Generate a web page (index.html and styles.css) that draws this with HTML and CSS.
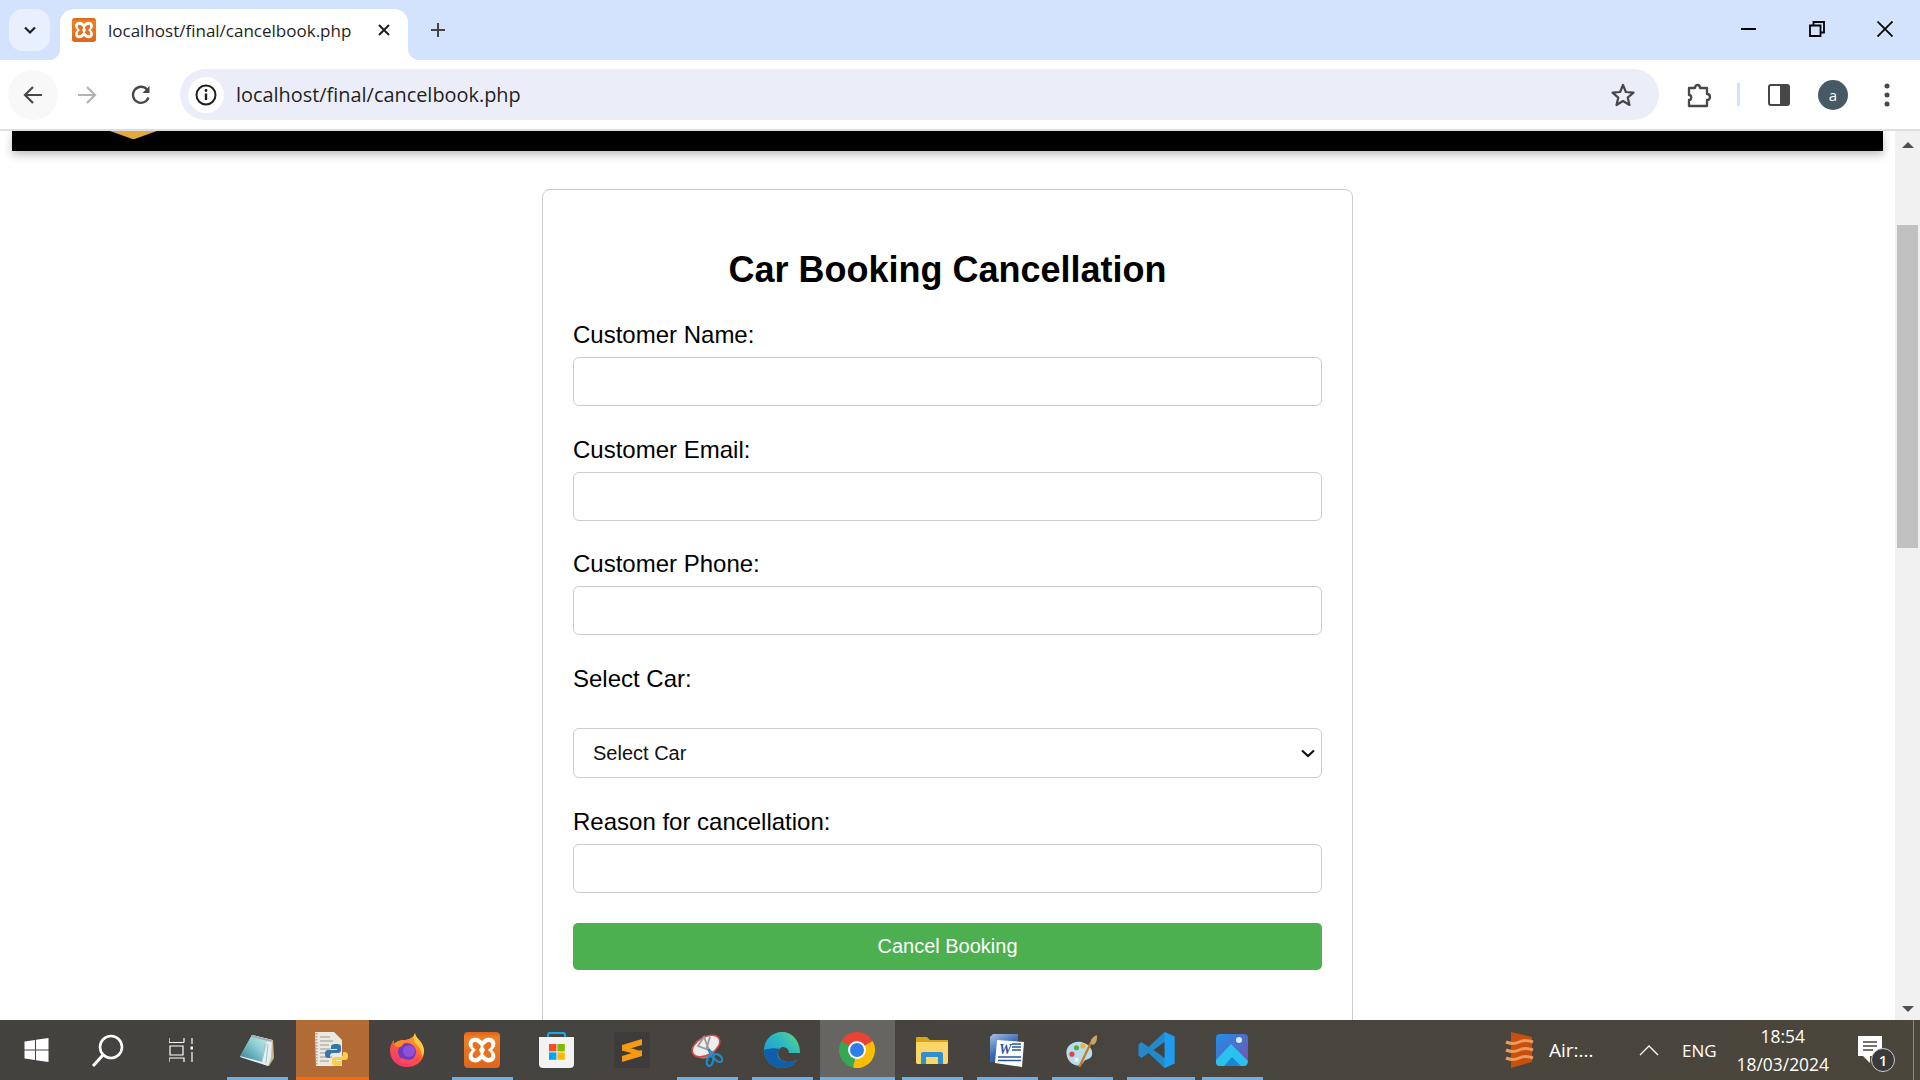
FILE: index.html
```html
<!DOCTYPE html>
<html lang="en">
<head>
    <meta charset="UTF-8">
    <meta name="viewport" content="width=device-width, initial-scale=1.0">
    <title>localhost/final/cancelbook.php</title>
    <link rel="stylesheet" href="styles.css">
</head>
<body>

    <svg class="defs" width="0" height="0">
        <defs>
            <linearGradient id="xamppBg" x1="0" y1="0" x2="0" y2="1"><stop offset="0" stop-color="#d9651c"/><stop offset="0.15" stop-color="#f07f22"/><stop offset="1" stop-color="#e0651a"/></linearGradient>
            <linearGradient id="photosBg" x1="0" y1="0" x2="1" y2="1"><stop offset="0" stop-color="#1e90e8"/><stop offset="1" stop-color="#7a4fb0"/></linearGradient>
            <linearGradient id="padBg" x1="0" y1="1" x2="1" y2="0"><stop offset="0" stop-color="#2d7f93"/><stop offset="0.6" stop-color="#8fcfd6"/><stop offset="1" stop-color="#d4ecec"/></linearGradient>
            <linearGradient id="foxBg" x1="0.8" y1="0" x2="0.2" y2="1"><stop offset="0" stop-color="#ffb52e"/><stop offset="0.5" stop-color="#ff5b3a"/><stop offset="1" stop-color="#f5307a"/></linearGradient>
            <linearGradient id="edgeTop" x1="0" y1="1" x2="1" y2="0"><stop offset="0" stop-color="#1a8fd8"/><stop offset="0.6" stop-color="#2bb8c4"/><stop offset="1" stop-color="#66d975"/></linearGradient>
            <linearGradient id="wordBack" x1="0" y1="0" x2="0.6" y2="1"><stop offset="0" stop-color="#a9c1e6"/><stop offset="0.6" stop-color="#3a69b3"/><stop offset="1" stop-color="#2a559c"/></linearGradient>
        </defs>
        <symbol id="xampp" viewBox="0 0 36 36">
            <rect width="36" height="36" rx="4" fill="url(#xamppBg)"/>
            <path d="M9 6c4-1 6 0 9 3 3-3 5-4 9-3 4 1 5 5 4 8-1 2-2 3-3 4 1 1 2 2 3 4 1 3 0 7-4 8-4 1-6 0-9-3-3 3-5 4-9 3-4-1-5-5-4-8 1-2 2-3 3-4-1-1-2-2-3-4-1-3 0-7 4-8z" fill="#fff"/>
            <path d="M11 10c2 0 3 1 5 3 1 1 1 2 0 3l-1 2 1 2c1 1 1 2 0 3-2 2-3 3-5 3-3 0-3-4-1-6l2-2-2-2c-2-2-2-6 1-6zM25 10c-2 0-3 1-5 3-1 1-1 2 0 3l1 2-1 2c-1 1-1 2 0 3 2 2 3 3 5 3 3 0 3-4 1-6l-2-2 2-2c2-2 2-6-1-6z" fill="#e8701e"/>
        </symbol>
    </svg>

    <header class="tabstrip">
        <button class="tab-search" aria-label="Search tabs">
            <svg width="16" height="16" viewBox="0 0 16 16"><path d="M3 5.500l5 5 5-5" fill="none" stroke="#1f1f1f" stroke-width="2.200"/></svg>
        </button>
        <div class="tab">
            <svg class="favicon" width="24" height="24"><use href="#xampp"/></svg>
            <span class="tab-title">localhost/final/cancelbook.php</span>
            <svg class="tab-close" width="14" height="14" viewBox="0 0 14 14"><path d="M2 2l10 10M12 2L2 12" stroke="#1f1f1f" stroke-width="2"/></svg>
        </div>
        <svg class="new-tab" width="18" height="18" viewBox="0 0 18 18"><path d="M9 2v14M2 9h14" stroke="#444" stroke-width="2"/></svg>
        <div class="window-controls">
            <span class="win-btn"><svg width="16" height="16" viewBox="0 0 16 16"><path d="M0 8h15" stroke="#000" stroke-width="2"/></svg></span>
            <span class="win-btn"><svg width="16" height="16" viewBox="0 0 16 16"><path d="M1 4.500h10.500v10.500H1zM4.500 4V1H15v10.500h-3" fill="none" stroke="#000" stroke-width="1.800"/></svg></span>
            <span class="win-btn"><svg width="16" height="16" viewBox="0 0 16 16"><path d="M.5.500l15 15M15.500.500l-15 15" stroke="#000" stroke-width="1.800"/></svg></span>
        </div>
    </header>

    <nav class="toolbar">
        <span class="tool-btn tool-btn-hover">
            <svg width="22" height="22" viewBox="0 0 22 22"><path d="M20 11H3M11 3l-8 8 8 8" fill="none" stroke="#474747" stroke-width="2.200"/></svg>
        </span>
        <span class="tool-btn">
            <svg width="22" height="22" viewBox="0 0 22 22"><path d="M2 11h17M11 3l8 8-8 8" fill="none" stroke="#b3b3b3" stroke-width="2.200"/></svg>
        </span>
        <span class="tool-btn">
            <svg width="22" height="22" viewBox="0 0 22 22"><path d="M18.500 13.500A8 8 0 1 1 17 5.500" fill="none" stroke="#474747" stroke-width="2.300"/><path d="M19.500 2v7h-7z" fill="#474747"/></svg>
        </span>
        <div class="omnibox">
            <span class="site-info">
                <svg width="22" height="22" viewBox="0 0 22 22"><circle cx="11" cy="11" r="9.500" fill="none" stroke="#1f1f1f" stroke-width="2"/><path d="M11 9.500v6.500" stroke="#1f1f1f" stroke-width="2.400"/><circle cx="11" cy="6.500" r="1.400" fill="#1f1f1f"/></svg>
            </span>
            <span class="url">localhost/final/cancelbook.php</span>
            <svg class="star" width="26" height="26" viewBox="0 0 26 26"><path d="M13 3l2.900 7 7.600.600-5.800 5 1.800 7.400L13 19l-6.500 4 1.800-7.400-5.800-5 7.600-.600z" fill="none" stroke="#474747" stroke-width="2.200" stroke-linejoin="round"/></svg>
        </div>
        <span class="tool-btn ext-btn">
            <svg width="26" height="26" viewBox="0 0 26 26"><path d="M3 6h6c0-4 5-4 5 0h7v6c4 0 4 6 0 6v6H3v-6c3 0 3-5 0-5z" fill="none" stroke="#474747" stroke-width="2.300" stroke-linejoin="round"/></svg>
        </span>
        <span class="divider"></span>
        <span class="tool-btn panel-btn">
            <svg width="22" height="22" viewBox="0 0 22 22"><rect x="1" y="1" width="20" height="20" rx="2" fill="none" stroke="#474747" stroke-width="2"/><path d="M12 1h7a2 2 0 0 1 2 2v16a2 2 0 0 1-2 2h-7z" fill="#474747"/></svg>
        </span>
        <span class="tool-btn"><span class="avatar">a</span></span>
        <span class="tool-btn">
            <svg width="6" height="24" viewBox="0 0 6 24"><circle cx="3" cy="3" r="2.500" fill="#474747"/><circle cx="3" cy="12" r="2.500" fill="#474747"/><circle cx="3" cy="21" r="2.500" fill="#474747"/></svg>
        </span>
    </nav>

    <div class="viewport">
        <main class="page">
            <div class="banner">
                <svg class="banner-logo" width="47" height="8" viewBox="0 0 47 8"><path d="M0 0h47L26 7.500q-2.500 1-5 0z" fill="#e2a93f"/></svg>
            </div>
            <form class="card">
                <h2>Car Booking Cancellation</h2>
                <div class="field">
                    <label>Customer Name:</label>
                    <input type="text">
                </div>
                <div class="field">
                    <label>Customer Email:</label>
                    <input type="text">
                </div>
                <div class="field">
                    <label>Customer Phone:</label>
                    <input type="text">
                </div>
                <div class="field">
                    <label class="label-select">Select Car:</label>
                    <div class="select-wrap">
                        <select><option>Select Car</option></select>
                        <svg class="select-arrow" width="14" height="9" viewBox="0 0 14 9"><path d="M1 1.500l6 5.500 6-5.500" fill="none" stroke="#111" stroke-width="2.200"/></svg>
                    </div>
                </div>
                <div class="field field-last">
                    <label>Reason for cancellation:</label>
                    <input type="text">
                </div>
                <button type="button" class="submit">Cancel Booking</button>
            </form>
        </main>
        <div class="scrollbar">
            <span class="arrow arrow-up"></span>
            <span class="thumb"></span>
            <span class="arrow arrow-down"></span>
        </div>
    </div>

    <footer class="taskbar">
        <span class="task task-start">
            <svg width="25" height="24" viewBox="0 0 24 24"><path d="M0 3.500L10.500 2v9.500H0zM11.500 1.800L24 0v11.500H11.500zM0 12.500h10.500V22L0 20.500zM11.500 12.500H24V24l-12.500-1.800z" fill="#fff"/></svg>
        </span>
        <span class="task task-search">
            <svg width="33" height="33" viewBox="0 0 33 33"><circle cx="20" cy="13" r="11" fill="none" stroke="#fff" stroke-width="2.600"/><path d="M12 21L2 32" stroke="#fff" stroke-width="3"/></svg>
        </span>
        <span class="task task-view">
            <svg width="24" height="24" viewBox="0 0 24 24" fill="none" stroke="#fff" stroke-width="1.200"><path d="M0 4.500h15M15 0v4.500M0 0v4.500M1 8h13v9H1zM0 24v-4h15v4M23 0v6M23 14v10"/><path d="M21.500 8.500h3v3h-3z" fill="#fff" stroke="none"/></svg>
        </span>

        <span class="task running">
            <svg width="34" height="32" viewBox="0 0 34 32"><path d="M12 1l21 5 1 18-5 8-6-2z" fill="#c9b98a"/><path d="M12 1l20 5-1 18-3 8L0 23z" fill="#e7eef0"/><path d="M12 1l16 4-6 23L0 22z" fill="url(#padBg)"/><path d="M12 1l20 5-.5 2L11 3z" fill="#9fb0b2"/><path d="M25 10l-3 17M28 10l-2 19" stroke="#a5c4cc"/></svg>
        </span>
        <span class="task active-file">
            <svg width="33" height="34" viewBox="0 0 33 34"><path d="M0 0h19l8 8v26H1z" fill="#ebe8e2"/><path d="M1.500 1v32" stroke="#b4a699" stroke-width="2" stroke-dasharray="1.500 1.500"/><path d="M5 5h10M5 9h13M5 13h9M5 17h11M5 21h10M5 25h12M5 29h9" stroke="#9a968f" stroke-width="1.200"/><path d="M21 12c-4 0-5 1-5 3v2h6v1h-9c-2 0-3 1-3 4s1 4 3 4h2v-2c0-2 1-3 3-3h5c2 0 3-1 3-3v-3c0-2-1-3-5-3z" fill="#3476ab"/><path d="M22 34c4 0 5-1 5-3v-2h-6v-1h9c2 0 3-1 3-4s-1-4-3-4h-2v2c0 2-1 3-3 3h-5c-2 0-3 1-3 3v3c0 2 1 3 5 3z" fill="#f8d047"/></svg>
        </span>
        <span class="task">
            <svg width="34" height="34" viewBox="0 0 34 34"><path d="M25 0c0 5 8 8 9 17 1 10-7 17-17 17S0 27 0 17c0-4 2-8 4-10 0 2 0 3 1 4 2-3 6-4 10-4 5-1 9-3 10-7z" fill="url(#foxBg)"/><path d="M25 0c0 5 8 8 9 17 0 3-1 5-2 7 0-7-4-12-7-14-1-3-2-6 0-10z" fill="#ffc93a"/><circle cx="17" cy="19" r="9" fill="#6d3cc0"/><circle cx="19" cy="18" r="6" fill="#9050d8"/><path d="M4 11c3-4 10-5 15-3-3 0-6 2-7 5-3 2-7 1-8-2z" fill="#ff8a2a"/><path d="M8 28c6 4 16 3 21-4-4 3-12 4-17 1z" fill="#ff4a5a"/></svg>
        </span>
        <span class="task running">
            <svg width="36" height="36"><use href="#xampp"/></svg>
        </span>
        <span class="task">
            <svg width="35" height="36" viewBox="0 0 35 36"><path d="M9 7V3q0-2 2-2h13q2 0 2 2v4" fill="none" stroke="#1ca7e0" stroke-width="2.200"/><path d="M0 5h35v27q0 4-4 4H4q-4 0-4-4z" fill="#f3f3f3"/><path d="M10 12h7.400v7.400H10z" fill="#f25022"/><path d="M18.400 12h7.400v7.400h-7.400z" fill="#7fba00"/><path d="M10 20.400h7.400v7.400H10z" fill="#00a4ef"/><path d="M18.400 20.400h7.400v7.400h-7.400z" fill="#ffb900"/></svg>
        </span>
        <span class="task">
            <span class="sublime">
                <svg width="20" height="23" viewBox="0 0 20 23"><path d="M20 0v6L0 12V6zM20 11v6L0 23v-6zM0 6.500l20 6v4.500L0 11.500z" fill="#f59a12"/></svg>
            </span>
        </span>
        <span class="task running">
            <svg width="33" height="33" viewBox="0 0 33 33"><ellipse cx="15" cy="14" rx="12" ry="10" transform="rotate(-30 15 14)" fill="#8f8f8f"/><ellipse cx="16" cy="12" rx="15" ry="9" transform="rotate(-30 16 12)" fill="#eee" stroke="#d8484a" stroke-width="1.600"/><path d="M14 3l5 13-11-4zM20 3l-4 13" fill="none" stroke="#9a9a9a" stroke-width="1.800"/><path d="M18 15l3 7M19 15l5 6" stroke="#1c8bc9" stroke-width="1.600"/><ellipse cx="20" cy="27" rx="3" ry="5" transform="rotate(15 20 27)" fill="none" stroke="#1c8bc9" stroke-width="2.200"/><ellipse cx="28" cy="24" rx="3" ry="5" transform="rotate(-50 28 24)" fill="none" stroke="#1c8bc9" stroke-width="2.200"/></svg>
        </span>
        <span class="task running">
            <svg width="36" height="36" viewBox="0 0 36 36"><path d="M18 0C8 0 0 8 0 18c0 10 8 18 17 18 7 0 12-2 16-8-8 4-19 2-19-7 0-3 2-5 4-6 6 0 7 4 7 6h11C36 8 28 0 18 0z" fill="url(#edgeTop)"/><path d="M0 18c0 10 8 18 17 18 7 0 12-2 16-8-7 3-15 3-19-3-1-3 0-6 2-8-6-2-14 0-16 1z" fill="#0f5ea8"/></svg>
        </span>
        <span class="task running current">
            <svg width="36" height="36" viewBox="0 0 36 36"><path d="M18 18L2.400 9A18 18 0 0 1 33.600 9z" fill="#ea4335"/><path d="M18 18L2.400 9A18 18 0 0 0 14 35.600z" fill="#34a853"/><path d="M18 18L33.600 9A18 18 0 0 1 14 35.600z" fill="#fbbc04"/><circle cx="18" cy="18" r="9" fill="#fff"/><circle cx="18" cy="18" r="7" fill="#2f7de8"/></svg>
        </span>
        <span class="task running">
            <svg width="32" height="27" viewBox="0 0 32 27"><path d="M0 1q0-1 1-1h10l3 3h18v22q0 2-2 2H2q-2 0-2-2z" fill="#dda316"/><path d="M0 5h32v20q0 2-2 2H2q-2 0-2-2z" fill="#fcd768"/><path d="M5 27V17q0-2 2-2h18q2 0 2 2v10h-5v-7H10v7z" fill="#2f8fd1"/></svg>
        </span>
        <span class="task running">
            <svg width="34" height="33" viewBox="0 0 34 33"><path d="M3 0h25v28H0V3z" fill="url(#wordBack)"/><path d="M7 6l27 2-2 25-27-4z" fill="#fff"/><text x="9" y="20" class="word-w">W</text><path d="M22 10h9M22 13h9M22 16h9M8 23h23M8 26.500h23" stroke="#2a559c" stroke-width="1.600"/></svg>
        </span>
        <span class="task running">
            <svg width="34" height="33" viewBox="0 0 36 36"><path d="M1 20c0-8 9-13 17-11 9 2 12 9 11 14-1 5-7 4-9 7-2 4-5 5-9 4C6 33 1 28 1 20z" fill="#b7dcef"/><circle cx="7" cy="22" r="2.800" fill="#e4433c"/><circle cx="12" cy="15" r="2.800" fill="#55a84a"/><circle cx="19" cy="13" r="2.800" fill="#efb531"/><circle cx="12" cy="28" r="2.500" fill="#eeeeee"/><path d="M15 36L28 9" stroke="#c97a1f" stroke-width="2.500"/><path d="M27 10c0-4 3-7 7-9 1 4 0 9-4 11z" fill="#c9a36a"/></svg>
        </span>
        <span class="task running running-stack">
            <svg width="37" height="36" viewBox="0 0 36 36"><path d="M26 0l10 4.500v27L26 36 10 21l-7 5-3-2.500v-11L3 10l7 5z" fill="#2489ca"/><path d="M26 0l10 4.500v27L26 36z" fill="#1f9cf0"/><path d="M26 10L15 18l11 8z" fill="#45423e"/></svg>
        </span>
        <span class="task running">
            <svg width="32" height="32" viewBox="0 0 32 32"><rect width="32" height="32" rx="4" fill="url(#photosBg)"/><circle cx="23" cy="6" r="3" fill="#dfe8ff"/><path d="M0 26L15 10l17 17q-1 5-4 5H4q-4 0-4-4z" fill="#29c2ee"/><path d="M8 32l8-9 9 9z" fill="#1a86d8"/></svg>
        </span>

        <div class="tray">
            <svg class="tray-app" width="30" height="36" viewBox="0 0 30 36"><path d="M6 0l21 5v25L6 36z" fill="#c8500f"/><path d="M1 10q7 3 13 0t14 0M1 18q7 3 13 0t14 0M1 26q7 3 13 0t14 0" fill="none" stroke="#ee9a5c" stroke-width="3"/></svg>
            <span class="tray-text">Air:...</span>
            <svg class="tray-caret" width="20" height="11" viewBox="0 0 20 11"><path d="M1 10l9-9 9 9" fill="none" stroke="#fff" stroke-width="1.300"/></svg>
            <span class="tray-lang">ENG</span>
            <div class="clock">
                <span>18:54</span>
                <span>18/03/2024</span>
            </div>
            <div class="notify">
                <svg width="25" height="28" viewBox="0 0 25 28"><path d="M0 0h24v20H12v7l-7-7H0z" fill="#fff"/><path d="M5 6h14M5 10h14M5 14h10" stroke="#4a4540" stroke-width="1.300"/></svg>
                <span class="notify-count">1</span>
            </div>
        </div>
    </footer>

</body>
</html>
```

FILE: styles.css
```css
* {
    box-sizing: border-box;
}
html, body {
    height: 100%;
}
body {
    display: flex;
    flex-direction: column;
    margin: 0;
    overflow: hidden;
    font-family: "Liberation Sans", Arial, sans-serif;
    background-color: #fff;
}
.defs {
    display: block;
    height: 0;
}
svg {
    display: block;
    flex-shrink: 0;
}

/* browser tabs row */
.tabstrip {
    display: flex;
    align-items: flex-start;
    flex: 0 0 60px;
    padding: 9px 0 0 9px;
    background-color: #d3e3fd;
}
.tab-search {
    display: flex;
    align-items: center;
    justify-content: center;
    width: 41px;
    height: 42px;
    padding: 0;
    border: 0;
    border-radius: 14px;
    background-color: #e8f0fe;
}
.tab {
    position: relative;
    display: flex;
    align-items: center;
    width: 348px;
    height: 51px;
    margin-left: 10px;
    padding: 0 17px 9px 12px;
    border-radius: 14px 14px 0 0;
    background-color: #fff;
}
.tab::before,
.tab::after {
    content: "";
    position: absolute;
    bottom: 0;
    width: 12px;
    height: 12px;
}
.tab::before {
    left: -12px;
    background: radial-gradient(circle at 0 0, #d3e3fd 12px, #fff 12.5px);
}
.tab::after {
    right: -12px;
    background: radial-gradient(circle at 100% 0, #d3e3fd 12px, #fff 12.5px);
}
.tab-title {
    flex: 1;
    margin-left: 12px;
    font-family: "Open Sans", sans-serif;
    font-size: 17px;
    color: #1f1f1f;
    white-space: nowrap;
}
.new-tab {
    margin: 12px 0 0 21px;
}
.window-controls {
    display: flex;
    margin: 0 1px 0 auto;
}
.win-btn {
    display: flex;
    align-items: center;
    justify-content: center;
    width: 68px;
    height: 40px;
}

/* address bar row */
.toolbar {
    position: relative;
    display: flex;
    align-items: center;
    gap: 4px;
    flex: 0 0 71px;
    padding: 0 8px;
    border-bottom: 2px solid #dedede;
    border-radius: 12px 12px 0 0;
    background-color: #fff;
}
.tool-btn {
    display: flex;
    align-items: center;
    justify-content: center;
    width: 50px;
    height: 50px;
    border-radius: 50%;
}
.tool-btn-hover {
    background-color: #f8f8f8;
}
.omnibox {
    display: flex;
    align-items: center;
    flex: 1;
    height: 51px;
    margin: 0 11px 0 10px;
    padding: 0 23px 0 8px;
    border-radius: 26px;
    background-color: #ebeef8;
}
.site-info {
    display: flex;
    align-items: center;
    justify-content: center;
    width: 36px;
    height: 36px;
    border-radius: 50%;
    background-color: #fff;
}
.url {
    flex: 1;
    margin-left: 12px;
    font-family: "Open Sans", sans-serif;
    font-size: 19.900px;
    color: #1f1f1f;
}
.divider {
    width: 3px;
    height: 23px;
    margin: 0 10px 0 9px;
    background-color: #d3e3fd;
}
.avatar {
    display: flex;
    align-items: center;
    justify-content: center;
    width: 30px;
    height: 30px;
    border-radius: 50%;
    background-color: #455a64;
    font-family: "Open Sans", sans-serif;
    font-size: 15px;
    color: #fff;
}

/* page area */
.viewport {
    display: flex;
    flex: 1;
    min-height: 0;
}
.page {
    flex: 1;
    min-width: 0;
    padding: 0 12px;
    overflow: hidden;
}
.banner {
    height: 20px;
    padding-left: 98px;
    background-color: #000;
    box-shadow: 0 4px 8px rgba(0, 0, 0, 0.25);
}
.card {
    width: 811px;
    margin: 38px auto 0;
    padding: 30px 30px 60px;
    border: 1px solid #ccc;
    border-radius: 8px;
    background-color: #fff;
}
.card h2 {
    margin: 29px 0 31px;
    font-size: 36px;
    line-height: 41px;
    text-align: center;
    color: #000;
}
.field {
    margin-bottom: 29.500px;
}
.field-last {
    margin-bottom: 30.500px;
}
.field label {
    display: block;
    height: 28px;
    margin-bottom: 8px;
    font-size: 24px;
    line-height: 28px;
    color: #000;
}
.field .label-select {
    margin-bottom: 35.500px;
}
.field input,
.field select {
    display: block;
    width: 100%;
    height: 49px;
    border: 1px solid #ccc;
    border-radius: 6px;
    background-color: #fff;
    font-family: "Liberation Sans", Arial, sans-serif;
    font-size: 20px;
}
.field input {
    padding: 0 15px;
}
.field select {
    height: 50px;
    padding: 0 19px;
    appearance: none;
    color: #111;
}
.select-wrap {
    position: relative;
}
.select-arrow {
    position: absolute;
    top: 21px;
    right: 7px;
}
.submit {
    display: block;
    width: 100%;
    height: 47px;
    border: 0;
    border-radius: 5px;
    background-color: #4caf50;
    font-family: "Liberation Sans", Arial, sans-serif;
    font-size: 20px;
    color: #fff;
}

/* scrollbar */
.scrollbar {
    display: flex;
    flex-direction: column;
    align-items: center;
    flex: 0 0 25px;
    padding-top: 11px;
    background-color: #f1f1f1;
}
.arrow {
    width: 0;
    height: 0;
    border-left: 6px solid transparent;
    border-right: 6px solid transparent;
}
.arrow-up {
    border-bottom: 6px solid #505050;
}
.arrow-down {
    margin-top: 458px;
    border-top: 6px solid #505050;
}
.thumb {
    width: 21px;
    height: 323px;
    margin-top: 77px;
    background-color: #c1c1c1;
}

/* windows taskbar */
.taskbar {
    display: flex;
    flex: 0 0 60px;
    background: linear-gradient(90deg, #44423f, #474440 50%, #4b463b);
    color: #fff;
}
.task {
    position: relative;
    display: flex;
    align-items: center;
    justify-content: center;
    flex: 0 0 75px;
    height: 60px;
    padding-right: 2px;
}
.task-start {
    flex-basis: 72px;
    padding-right: 0;
}
.task-search {
    flex-basis: 71px;
    padding-right: 0;
}
.running::after {
    content: "";
    position: absolute;
    left: 7px;
    right: 7px;
    bottom: 0;
    height: 3px;
    background-color: #6cb0e6;
}
.task-view {
    flex-basis: 77px;
}
.current {
    background-color: #666561;
}
.current::after {
    left: 0;
    right: 0;
}
.running-stack::after {
    right: 0;
    left: 7px;
}
.active-file {
    margin: 0 1px;
    flex-basis: 73px;
    background-color: #b36b35;
    border-bottom: 3px solid #f7690c;
}
.sublime {
    display: flex;
    align-items: center;
    justify-content: center;
    width: 36px;
    height: 36px;
    background-color: #3d3c3a;
}
.word-w {
    font-family: "Liberation Serif", serif;
    font-size: 14px;
    font-style: italic;
    font-weight: bold;
    fill: #2a559c;
}
.tray {
    display: flex;
    align-items: center;
    flex: 1;
    margin-right: 6px;
    padding-left: 235px;
    border-right: 1px solid #8a8780;
}
.tray-app {
    margin-right: 14px;
}
.tray-text,
.tray-lang,
.clock {
    font-family: "Open Sans", sans-serif;
    color: #fff;
}
.tray-text {
    width: 45px;
    font-size: 19px;
    white-space: nowrap;
}
.tray-caret {
    margin-left: 45px;
}
.tray-lang {
    margin-left: 23px;
    font-size: 17px;
}
.clock {
    display: flex;
    flex-direction: column;
    align-items: center;
    margin-left: 20px;
    font-size: 17.400px;
    line-height: 28px;
}
.notify {
    position: relative;
    margin-left: 29px;
}
.notify-count {
    position: absolute;
    top: 12px;
    left: 13px;
    width: 24px;
    height: 24px;
    border: 1px solid #ccc;
    border-radius: 50%;
    background-color: #3a3a3a;
    font-family: "Open Sans", sans-serif;
    font-size: 15px;
    font-weight: 600;
    line-height: 22px;
    text-align: center;
}
```
